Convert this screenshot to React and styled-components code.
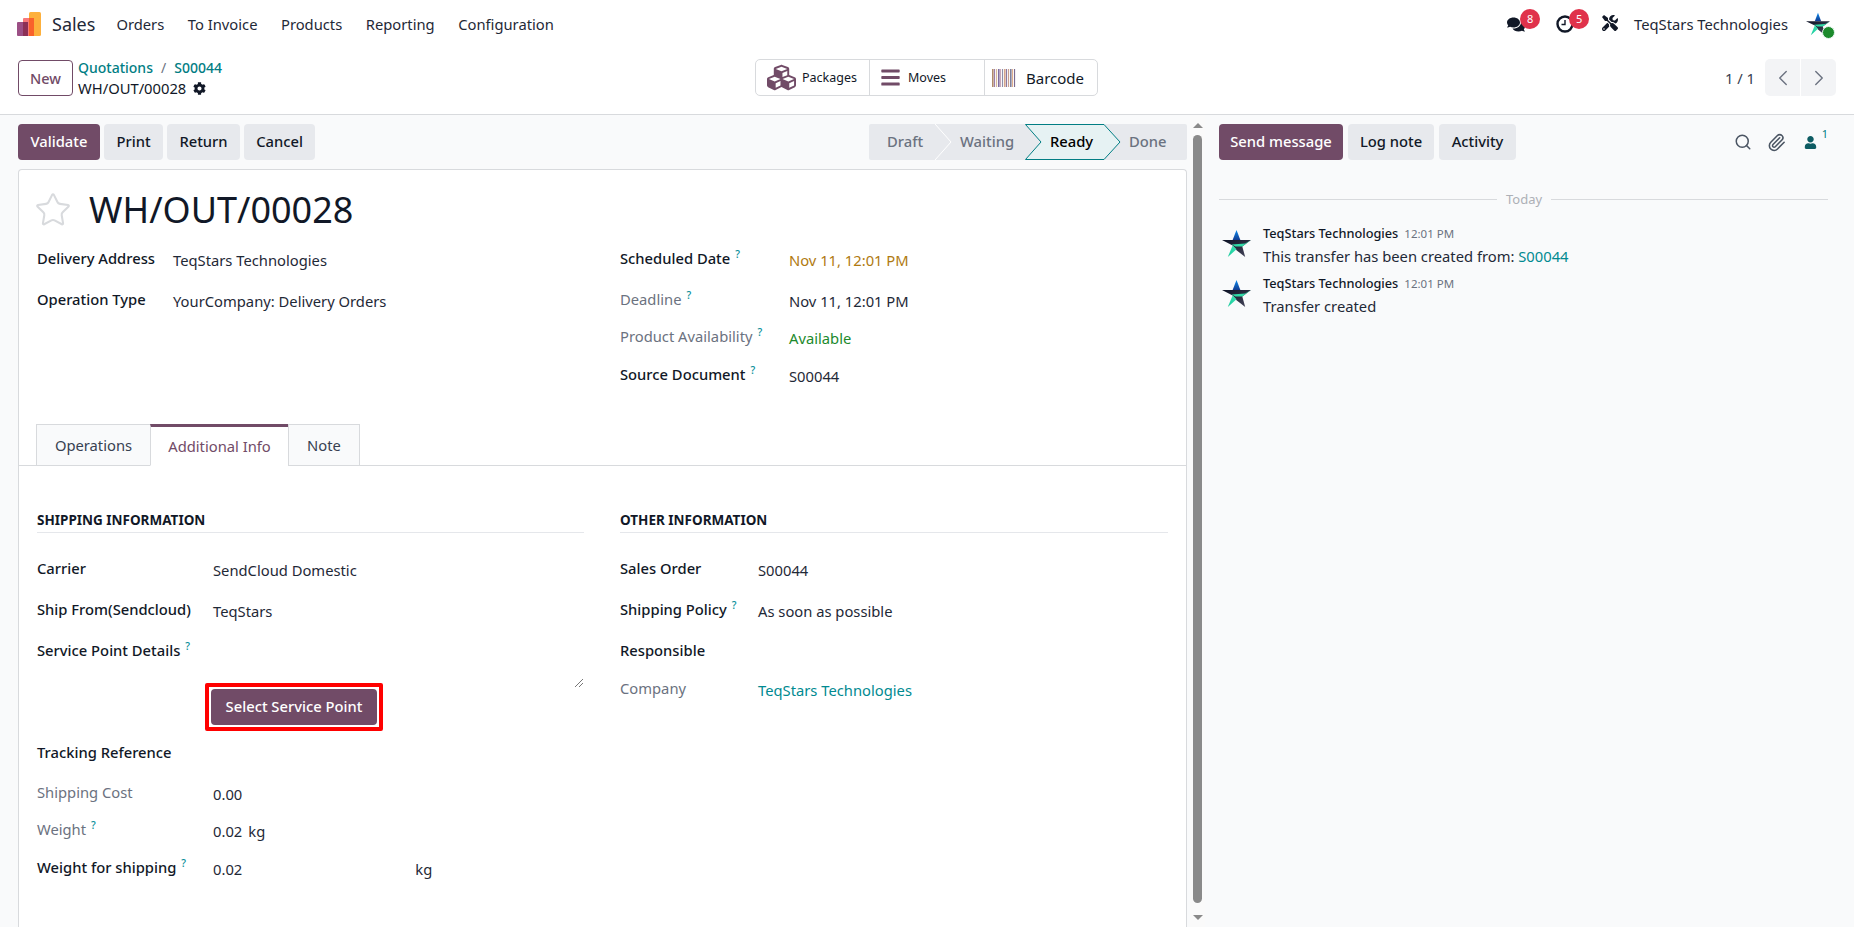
import React from 'react';
import styled, { createGlobalStyle } from 'styled-components';
import { FaCubes, FaBars, FaCog, FaComments, FaTools, FaUser } from 'react-icons/fa';
import { Search, Paperclip, ChevronLeft, ChevronRight, Star } from 'lucide-react';

const Primary = '#714B67';
const Teal = '#017E84';
const Ink = '#1f2937';
const Line = '#d8dadd';
const Muted = '#6b7280';
const BaseSize = '14.75px';

const GlobalStyle = createGlobalStyle`
  html, body { margin: 0; padding: 0; height: 100%; overflow: hidden; }
  body {
    font-family: "Noto Sans", "Open Sans", sans-serif;
    font-size: ${BaseSize};
    color: ${Ink};
    background: #f9fafb;
  }
  * { box-sizing: border-box; }
`;

const Page = styled.div`
  width: 1854px;
  height: 927px;
  display: flex;
  flex-direction: column;
  overflow: hidden;
`;

const Navbar = styled.header`
  height: 46px;
  flex: none;
  background: #fff;
  display: flex;
  align-items: center;
  padding: 2px 24px 0 17px;
`;

const AppName = styled.span`
  font-size: 18px;
  margin: 0 21px 0 11px;
`;

const NavLink = styled.span`
  margin-right: 23.5px;
`;

const NavRight = styled.div`
  margin-left: auto;
  display: flex;
  align-items: center;
`;

const NavIcon = styled.span`
  position: relative;
  display: flex;
  width: 18px;
  height: 18px;
  margin-right: ${({ $gap }) => $gap}px;
  font-size: ${({ $size }) => $size}px;
  color: #111827;
`;

const Badge = styled.span`
  position: absolute;
  top: -6px;
  left: 13px;
  width: 20px;
  height: 20px;
  border-radius: 50%;
  background: #e0324b;
  color: #fff;
  font-size: 11px;
  line-height: 20px;
  text-align: center;
`;

const Avatar = styled.span`
  position: relative;
  display: flex;
  margin-left: 18px;
`;

const OnlineDot = styled.span`
  position: absolute;
  right: -5px;
  bottom: -3px;
  width: 13px;
  height: 13px;
  border-radius: 50%;
  background: #1c8a2c;
  border: 1px solid #e8f6f2;
`;

const ControlPanel = styled.div`
  height: 69px;
  flex: none;
  background: #fff;
  border-bottom: 1px solid ${Line};
  display: grid;
  grid-template-columns: 737px 343px 1fr;
  align-items: center;
  padding: 0 18px;
  padding-bottom: 5px;
`;

const PanelLeft = styled.div`
  display: flex;
  align-items: center;
  gap: 5px;
`;

const NewButton = styled.button`
  width: 55px;
  height: 36px;
  background: #fff;
  border: 1px solid ${Primary};
  border-radius: 4px;
  color: ${Primary};
  font: 500 14.5px "Noto Sans", sans-serif;
  padding: 0;
`;

const Crumbs = styled.div`
  display: flex;
  flex-direction: column;
  line-height: 20px;
`;

const CrumbLink = styled.span`
  color: ${Teal};
  font-size: 14px;
  font-weight: 500;
`;

const CrumbSep = styled.span`
  color: ${Muted};
  font-size: 14px;
  margin: 0 8px;
`;

const CrumbCurrent = styled.span`
  display: flex;
  align-items: center;
  gap: 7px;
  color: #111827;
`;

const StatGroup = styled.div`
  display: grid;
  grid-template-columns: 113px 115px 1fr;
  height: 37px;
  background: #fff;
  border: 1px solid ${Line};
  border-radius: 5px;
`;

const StatButton = styled.div`
  display: flex;
  align-items: center;
  padding-left: ${({ $pad }) => $pad}px;
  gap: ${({ $gap }) => $gap}px;
  font-size: ${({ $big }) => ($big ? 15 : 12.5)}px;
  border-left: ${({ $first }) => ($first ? 'none' : `1px solid ${Line}`)};
  color: #111827;
`;

const Pager = styled.div`
  display: flex;
  justify-content: flex-end;
  align-items: center;
  color: #374151;
`;

const PagerLabel = styled.span`
  margin-right: 10px;
`;

const PagerButton = styled.span`
  width: 35px;
  height: 37px;
  background: #f3f4f6;
  display: flex;
  align-items: center;
  justify-content: center;
  color: #6b7280;
  border-radius: ${({ $left }) => ($left ? '5px 0 0 5px' : '0 5px 5px 0')};
  margin-left: ${({ $left }) => ($left ? 0 : 1)}px;
`;

const Workspace = styled.div`
  flex: 1;
  min-height: 0;
  display: flex;
`;

const FormPane = styled.div`
  width: 1196px;
  flex: none;
  padding: 9px 9px 0 18px;
  display: flex;
  flex-direction: column;
  overflow: hidden;
`;

const StatusRow = styled.div`
  display: flex;
  justify-content: space-between;
  height: 36px;
  flex: none;
`;

const ActionRow = styled.div`
  display: flex;
  gap: 4px;
`;

const ActionButton = styled.button`
  height: 36px;
  width: ${({ $w }) => $w}px;
  padding: 0 0 2px;
  border: 0;
  border-radius: 4px;
  background: ${({ $primary }) => ($primary ? Primary : '#e7e9ed')};
  color: ${({ $primary }) => ($primary ? '#fff' : '#111827')};
  font: 500 ${BaseSize} "Noto Sans", sans-serif;
`;

const StatusBar = styled.div`
  display: flex;
  width: 318px;
  height: 36px;
  background: #e7e9ed;
  border-radius: 2px;
`;

const Stage = styled.span`
  position: relative;
  width: ${({ $w }) => $w}px;
  display: flex;
  align-items: center;
  padding: 0 0 2px ${({ $pad }) => $pad}px;
  color: ${({ $active }) => ($active ? '#000' : Muted)};
  font-weight: 500;
`;

const StageShape = styled.svg`
  position: absolute;
  left: ${({ $x }) => $x}px;
  top: 0;
`;

const StageText = styled.span`
  position: relative;
`;

const Sheet = styled.main`
  margin-top: 9px;
  flex: 1;
  background: #fff;
  border: 1px solid ${Line};
  border-bottom: 0;
  border-radius: 4px 4px 0 0;
  display: flex;
  flex-direction: column;
`;

const SheetHead = styled.div`
  padding: 19px 18px 0;
  height: 254px;
  flex: none;
`;

const TitleRow = styled.div`
  display: flex;
  align-items: center;
  height: 42px;
  gap: 17px;
`;

const StarBox = styled.span`
  display: flex;
  margin-left: -3px;
  color: #d8dadd;
`;

const Title = styled.h1`
  margin: 0;
  font-size: 36px;
  font-weight: 400;
  line-height: 42px;
  color: #111827;
`;

const Columns = styled.div`
  display: grid;
  grid-template-columns: 547px 548px;
  gap: 36px;
`;

const FieldGrid = styled.div`
  display: grid;
  grid-template-columns: ${({ $label }) => $label}px 1fr;
  align-content: start;
`;

const FieldRow = styled.div`
  display: contents;
`;

const Label = styled.span`
  height: ${({ $h }) => $h}px;
  font-weight: ${({ $muted }) => ($muted ? 400 : 500)};
  color: ${({ $muted }) => ($muted ? Muted : '#111827')};
  line-height: 20px;
`;

const Value = styled.span`
  height: ${({ $h }) => $h}px;
  line-height: 20px;
  padding-top: 2px;
  color: ${({ $color }) => $color || '#1f2937'};
  display: flex;
  gap: ${({ $gap }) => $gap || 0}px;
`;

const Help = styled.sup`
  color: #0a8f9a;
  font-size: 10.5px;
  font-weight: 500;
  margin-left: 5px;
  line-height: 0;
`;

const HeadFields = styled(Columns)`
  margin-top: 17px;
`;

const Tabs = styled.nav`
  display: flex;
  height: 42px;
  flex: none;
  padding-left: 17px;
  border-bottom: 1px solid ${Line};
`;

const Tab = styled.span`
  width: ${({ $w }) => $w}px;
  height: 42px;
  background: ${({ $active }) => ($active ? '#fff' : '#f9fafb')};
  border: 1px solid ${Line};
  border-top: ${({ $active }) => ($active ? `3px solid ${Primary}` : `1px solid ${Line}`)};
  border-bottom: ${({ $active }) => ($active ? '1px solid #fff' : `1px solid ${Line}`)};
  margin-left: ${({ $first }) => ($first ? 0 : -1)}px;
  color: ${({ $active }) => ($active ? Primary : '#374151')};
  display: flex;
  align-items: center;
  justify-content: center;
`;

const TabBody = styled(Columns)`
  padding: 45px 18px 0;
`;

const GroupTitle = styled.h3`
  margin: 0 0 25px;
  height: 22px;
  padding-bottom: 4px;
  border-bottom: 1px solid #e5e7eb;
  font-size: 13.5px;
  line-height: 18px;
  font-weight: 700;
  color: #111827;
`;

const SpanCell = styled.div`
  grid-column: 1 / 3;
  height: 71px;
  padding-left: 168px;
  position: relative;
`;

const HighlightBox = styled.div`
  width: 178px;
  height: 48px;
  border: 4px solid #ff0000;
  border-radius: 2px;
  padding: 2px;
  margin-top: 12px;
`;

const SelectButton = styled.button`
  width: 100%;
  height: 36px;
  border: 0;
  border-radius: 4px;
  padding: 0 0 2px;
  background: ${Primary};
  color: #fff;
  font: 500 ${BaseSize} "Noto Sans", sans-serif;
`;

const Resizer = styled.svg`
  position: absolute;
  right: 0;
  top: 7px;
`;

const ScrollTrack = styled.div`
  width: 15px;
  flex: none;
  margin-left: -6px;
  background: #fafafa;
  display: flex;
  flex-direction: column;
  align-items: center;
`;

const ScrollArrow = styled.span`
  width: 0;
  height: 0;
  border-left: 5px solid transparent;
  border-right: 5px solid transparent;
  ${({ $down }) => ($down ? 'border-top: 5px solid #8a8a8a;' : 'border-bottom: 5px solid #8a8a8a;')}
  margin: ${({ $down }) => ($down ? '12px 0 7px' : '8px 0 7px')};
`;

const ScrollThumb = styled.span`
  flex: 1;
  width: 9px;
  border-radius: 5px;
  background: #8a8a8a;
`;

const Chatter = styled.aside`
  flex: 1;
  min-width: 0;
  padding: 9px 26px 0 14px;
  background: #f9fafb;
`;

const ChatTop = styled.div`
  display: flex;
  align-items: center;
  gap: 5px;
  height: 36px;
`;

const ChatTools = styled.div`
  margin-left: auto;
  display: flex;
  align-items: center;
  color: #4b5563;
`;

const ChatTool = styled.span`
  display: flex;
  margin-left: ${({ $gap }) => $gap}px;
`;

const FollowerCount = styled.sup`
  font-size: 11px;
  color: ${Teal};
  margin: -8px 0 0 5px;
  line-height: 1;
`;

const DayLine = styled.div`
  display: flex;
  align-items: center;
  gap: 9px;
  margin-top: 30px;
  font-size: 13px;
  color: #adb0b6;
  &::before, &::after {
    content: '';
    flex: 1;
    height: 1px;
    background: ${Line};
  }
  &::before { flex: none; width: 278px; }
`;

const Message = styled.div`
  display: flex;
  gap: 12px;
  margin-top: ${({ $gap }) => $gap}px;
  padding-left: 3px;
`;

const MessageAvatar = styled.span`
  display: flex;
  margin-top: 5px;
  align-self: flex-start;
`;

const MessageHead = styled.div`
  display: flex;
  align-items: baseline;
  gap: 6px;
  line-height: 18px;
  font-size: 12.75px;
  font-weight: 500;
  color: #111827;
`;

const MessageTime = styled.span`
  font-size: 11.5px;
  font-weight: 400;
  color: ${Muted};
`;

const MessageBody = styled.div`
  margin-top: 3px;
  line-height: 20px;
  color: #1f2937;
`;

const Link = styled.span`
  color: #018a91;
`;

function SalesLogo() {
  return (
    <svg width="24" height="24" viewBox="0 0 24 24">
      <rect x="12" y="0" width="12" height="24" rx="1.5" fill="#fdb03c" />
      <rect x="6" y="6" width="11" height="18" rx="1" fill="#f7797a" />
      <rect x="12" y="6" width="5" height="18" fill="#f9622b" />
      <rect x="0" y="10" width="11" height="14" rx="1" fill="#9b4f85" />
      <rect x="6" y="10" width="5" height="14" fill="#8c3056" />
    </svg>
  );
}

function StarLogo({ size }) {
  return (
    <svg width={size} height={size} viewBox="0 0 30 30">
      <defs>
        <linearGradient id="starBlue" x1="0" y1="0" x2="0" y2="1">
          <stop offset="0" stopColor="#0a8cf0" />
          <stop offset="1" stopColor="#123a8f" />
        </linearGradient>
        <linearGradient id="starDark" x1="0" y1="0" x2="1" y2="1">
          <stop offset="0" stopColor="#0b1024" />
          <stop offset="1" stopColor="#4a4a5e" />
        </linearGradient>
        <linearGradient id="starGreen" x1="0" y1="1" x2="1" y2="0">
          <stop offset="0" stopColor="#17c79a" />
          <stop offset="1" stopColor="#3ee6b5" />
        </linearGradient>
      </defs>
      <polygon points="15,1 11,11.5 15,11.5 19,11.5" fill="url(#starBlue)" />
      <polygon points="0,11.5 30,11.5 21,18 24,29 15,22 11,17" fill="url(#starDark)" />
      <polygon points="30,11.5 21,18 14,18 10,16 24,15" fill="#30dba8" />
      <polygon points="6,29 11,17 15,21" fill="url(#starGreen)" />
    </svg>
  );
}

function ClockIcon() {
  return (
    <svg width="18" height="18" viewBox="0 0 18 18" fill="none" stroke="#111827">
      <circle cx="9" cy="9" r="7.5" strokeWidth="2.4" />
      <path d="M9 5v4.5H5.5" strokeWidth="1.4" />
    </svg>
  );
}

function BarcodeIcon() {
  const stripes = ['#b08a6b', '#9c7fa8', '#d8b89a', '#7f6b9c', '#c9a8b8', '#8f8fa8', '#d4a58c', '#8a78a0', '#c9a090', '#7f7f9a', '#e0b090', '#7a6a90'];
  return (
    <svg width="24" height="18" viewBox="0 0 24 18">
      {stripes.map((c, i) => (
        <rect key={c + i} x={i * 2} y="0" width={i % 3 === 0 ? 1.6 : 1.1} height="18" fill={c} />
      ))}
    </svg>
  );
}

function Field({ label, value, h = 41, muted, help, color, gap }) {
  return (
    <FieldRow>
      <Label $h={h} $muted={muted}>
        {label}
        {help && <Help>?</Help>}
      </Label>
      <Value $h={h} $color={color} $gap={gap}>{value}</Value>
    </FieldRow>
  );
}

export default function App() {
  return (
    <Page>
      <GlobalStyle />
      <Navbar>
        <SalesLogo />
        <AppName>Sales</AppName>
        <NavLink>Orders</NavLink>
        <NavLink>To Invoice</NavLink>
        <NavLink>Products</NavLink>
        <NavLink>Reporting</NavLink>
        <NavLink>Configuration</NavLink>
        <NavRight>
          <NavIcon $size={19} $gap={31}><FaComments /><Badge>8</Badge></NavIcon>
          <NavIcon $gap={28}><ClockIcon /><Badge>5</Badge></NavIcon>
          <NavIcon $size={16} $gap={14}><FaTools /></NavIcon>
          <span>TeqStars Technologies</span>
          <Avatar><StarLogo size={24} /><OnlineDot /></Avatar>
        </NavRight>
      </Navbar>

      <ControlPanel>
        <PanelLeft>
          <NewButton>New</NewButton>
          <Crumbs>
            <span><CrumbLink>Quotations</CrumbLink><CrumbSep>/</CrumbSep><CrumbLink>S00044</CrumbLink></span>
            <CrumbCurrent>WH/OUT/00028 <FaCog size={13} /></CrumbCurrent>
          </Crumbs>
        </PanelLeft>
        <StatGroup>
          <StatButton $first $pad={11} $gap={6}><FaCubes size={29} color={Primary} />Packages</StatButton>
          <StatButton $pad={10} $gap={7}><FaBars size={21} color={Primary} />Moves</StatButton>
          <StatButton $big $pad={7} $gap={10}><BarcodeIcon />Barcode</StatButton>
        </StatGroup>
        <Pager>
          <PagerLabel>1 / 1</PagerLabel>
          <PagerButton $left><ChevronLeft size={26} strokeWidth={1.3} /></PagerButton>
          <PagerButton><ChevronRight size={26} strokeWidth={1.3} /></PagerButton>
        </Pager>
      </ControlPanel>

      <Workspace>
        <FormPane>
          <StatusRow>
            <ActionRow>
              <ActionButton $primary $w={82}>Validate</ActionButton>
              <ActionButton $w={59}>Print</ActionButton>
              <ActionButton $w={73}>Return</ActionButton>
              <ActionButton $w={71}>Cancel</ActionButton>
            </ActionRow>
            <StatusBar>
              <Stage $w={72} $pad={18}>
                <StageShape $x={66} width="18" height="36" viewBox="0 0 18 36">
                  <path d="M0 0 L16 18 L0 36" fill="none" stroke="#fff" strokeWidth="1" />
                </StageShape>
                <StageText>Draft</StageText>
              </Stage>
              <Stage $w={84} $pad={19}>
                <StageText>Waiting</StageText>
              </Stage>
              <Stage $w={95} $active $pad={25}>
                <StageShape $x={0} width="96" height="36" viewBox="0 0 96 36">
                  <path d="M0.5 0.5 H79 L95 18 L79 35.5 H0.5 L16 18 Z" fill="#e6f2f3" stroke={Teal} strokeWidth="1" />
                </StageShape>
                <StageText>Ready</StageText>
              </Stage>
              <Stage $w={67} $pad={9}>
                <StageText>Done</StageText>
              </Stage>
            </StatusBar>
          </StatusRow>

          <Sheet>
            <SheetHead>
              <TitleRow>
                <StarBox><Star size={38} strokeWidth={1.3} /></StarBox>
                <Title>WH/OUT/00028</Title>
              </TitleRow>
              <HeadFields>
                <FieldGrid $label={136}>
                  <Field label="Delivery Address" value="TeqStars Technologies" />
                  <Field label="Operation Type" value="YourCompany: Delivery Orders" />
                </FieldGrid>
                <FieldGrid $label={169}>
                  <Field label="Scheduled Date" help value="Nov 11, 12:01 PM" color="#b07a10" />
                  <Field label="Deadline" help muted h={37} value="Nov 11, 12:01 PM" />
                  <Field label="Product Availability" help muted h={38} value="Available" color="#1c8a2c" />
                  <Field label="Source Document" help value="S00044" />
                </FieldGrid>
              </HeadFields>
            </SheetHead>

            <Tabs>
              <Tab $first $w={115}>Operations</Tab>
              <Tab $active $w={139}>Additional Info</Tab>
              <Tab $w={72}>Note</Tab>
            </Tabs>

            <TabBody>
              <div>
                <GroupTitle>SHIPPING INFORMATION</GroupTitle>
                <FieldGrid $label={176}>
                  <Field label="Carrier" value="SendCloud Domestic" />
                  <Field label="Ship From(Sendcloud)" value="TeqStars" />
                  <Field label="Service Point Details" help h={31} value="" />
                  <SpanCell>
                    <HighlightBox><SelectButton>Select Service Point</SelectButton></HighlightBox>
                    <Resizer width="10" height="10" viewBox="0 0 10 10">
                      <path d="M1 9 L9 1 M5 9 L9 5" stroke="#555" strokeWidth="0.8" />
                    </Resizer>
                  </SpanCell>
                  <Field label="Tracking Reference" h={40} value="" />
                  <Field label="Shipping Cost" muted h={37} value="0.00" />
                  <Field label="Weight" help muted h={38} value={<><span>0.02</span><span>kg</span></>} gap={6} />
                  <Field label="Weight for shipping" help value={<><span>0.02</span><span>kg</span></>} gap={173} />
                </FieldGrid>
              </div>
              <div>
                <GroupTitle>OTHER INFORMATION</GroupTitle>
                <FieldGrid $label={138}>
                  <Field label="Sales Order" value="S00044" />
                  <Field label="Shipping Policy" help value="As soon as possible" />
                  <Field label="Responsible" h={38} value="" />
                  <Field label="Company" muted value={<Link>TeqStars Technologies</Link>} />
                </FieldGrid>
              </div>
            </TabBody>
          </Sheet>
        </FormPane>

        <ScrollTrack>
          <ScrollArrow />
          <ScrollThumb />
          <ScrollArrow $down />
        </ScrollTrack>

        <Chatter>
          <ChatTop>
            <ActionButton $primary $w={124}>Send message</ActionButton>
            <ActionButton $w={86}>Log note</ActionButton>
            <ActionButton $w={77}>Activity</ActionButton>
            <ChatTools>
              <ChatTool><Search size={18} strokeWidth={2} /></ChatTool>
              <ChatTool $gap={15}><Paperclip size={19} strokeWidth={2} /></ChatTool>
              <ChatTool $gap={18}><FaUser size={13} color="#0e5c63" /><FollowerCount>1</FollowerCount></ChatTool>
            </ChatTools>
          </ChatTop>
          <DayLine>Today</DayLine>
          <Message $gap={16}>
            <MessageAvatar><StarLogo size={29} /></MessageAvatar>
            <div>
              <MessageHead>TeqStars Technologies <MessageTime>12:01 PM</MessageTime></MessageHead>
              <MessageBody>This transfer has been created from: <Link>S00044</Link></MessageBody>
            </div>
          </Message>
          <Message $gap={8}>
            <MessageAvatar><StarLogo size={29} /></MessageAvatar>
            <div>
              <MessageHead>TeqStars Technologies <MessageTime>12:01 PM</MessageTime></MessageHead>
              <MessageBody>Transfer created</MessageBody>
            </div>
          </Message>
        </Chatter>
      </Workspace>
    </Page>
  );
}
